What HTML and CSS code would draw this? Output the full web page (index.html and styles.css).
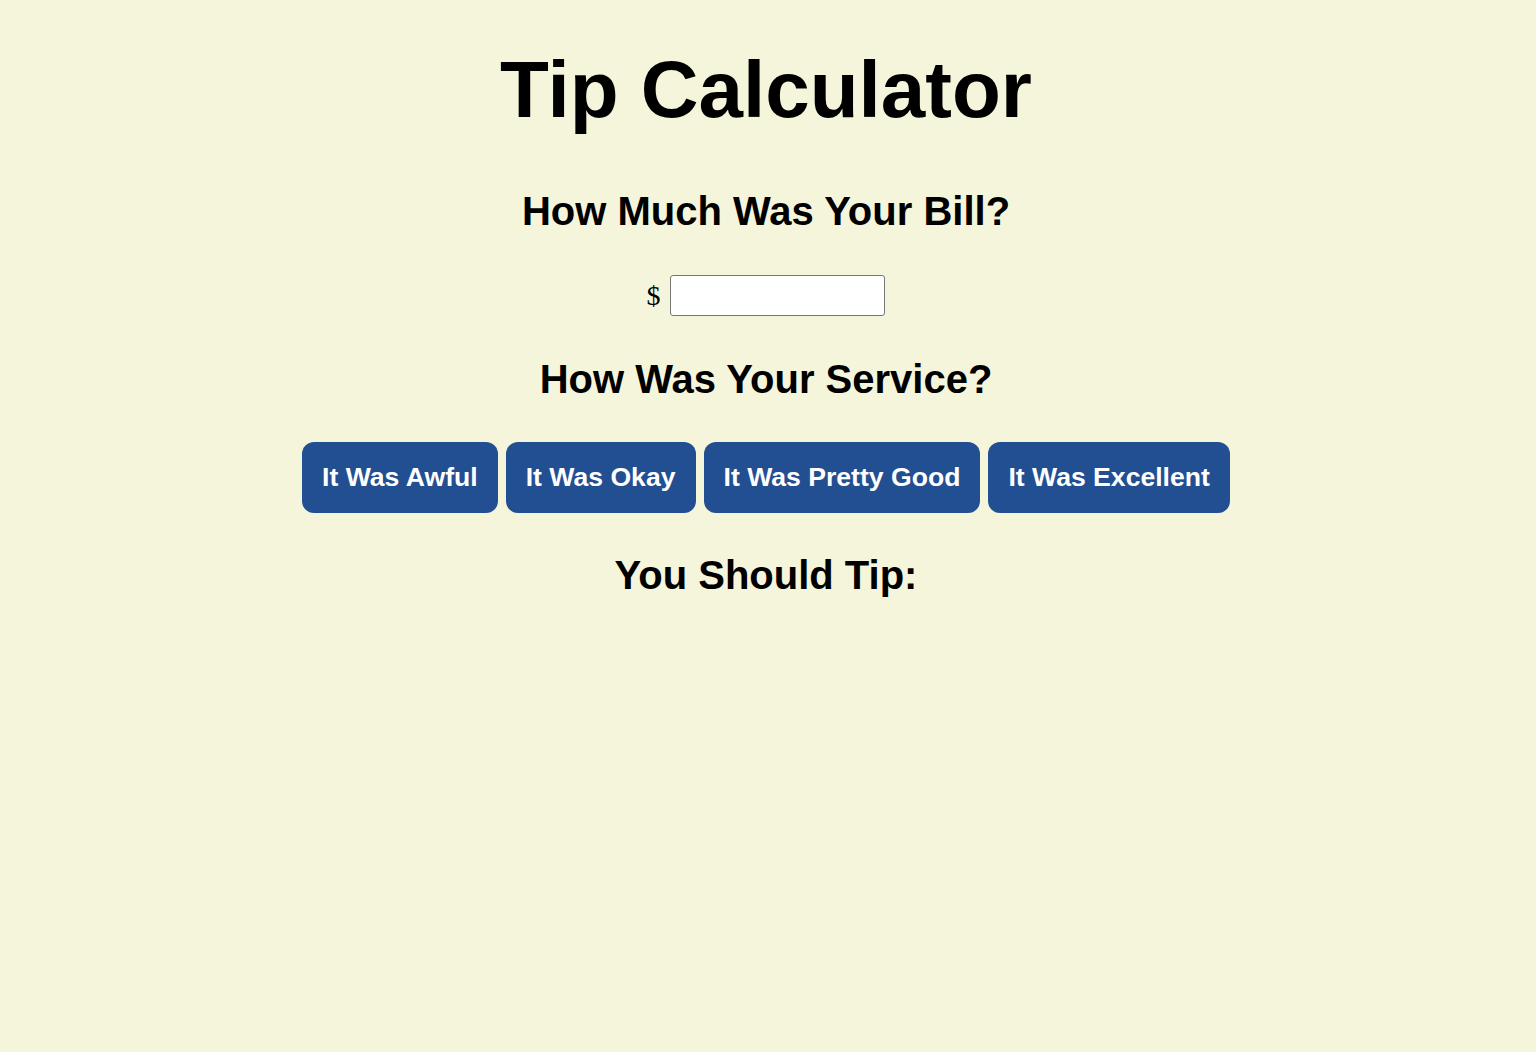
FILE: index.html
```html
<!DOCTYPE html>
<html lang="en">
<head>
<meta charset="utf-8">
<title>Tip Calculator</title>
<link rel="stylesheet" href="styles.css">
</head>
<body>
<main class="app">
  <h1 class="title">Tip Calculator</h1>
  <h2 class="question question-bill">How Much Was Your Bill?</h2>
  <div class="bill-row">
    <span class="currency">$</span>
    <input class="bill-input" type="text" aria-label="Bill amount">
  </div>
  <h2 class="question question-service">How Was Your Service?</h2>
  <div class="service-buttons">
    <button class="service-btn" type="button">It Was Awful</button>
    <button class="service-btn" type="button">It Was Okay</button>
    <button class="service-btn" type="button">It Was Pretty Good</button>
    <button class="service-btn" type="button">It Was Excellent</button>
  </div>
  <h2 class="question question-tip">You Should Tip:</h2>
</main>
</body>
</html>
```

FILE: styles.css
```css
html, body {
  margin: 0;
  padding: 0;
  height: 100%;
}

body {
  background: #f5f5dc;
  font-family: "Liberation Sans", Arial, Helvetica, sans-serif;
  color: #000;
}

.app {
  display: flex;
  flex-direction: column;
  align-items: center;
  padding-right: 4px;
}

.title {
  margin: 44px 0 0;
  font-size: 80px;
  font-weight: bold;
  line-height: 92px;
}

.question {
  margin: 0;
  font-size: 40px;
  font-weight: bold;
  line-height: 46px;
}

.question-bill {
  margin-top: 52px;
}

.bill-row {
  display: flex;
  align-items: center;
  gap: 9px;
  margin-top: 41px;
  margin-right: 1px;
}

.currency {
  font-family: "Liberation Serif", "Times New Roman", serif;
  font-size: 28px;
  line-height: 41px;
}

.bill-input {
  box-sizing: border-box;
  width: 215px;
  height: 41px;
  margin: 0;
  border: 1px solid #767676;
  border-radius: 3px;
  background: #fff;
  font-size: 20px;
  padding: 0 6px;
}

.question-service {
  margin-top: 40px;
}

.service-buttons {
  display: flex;
  gap: 8px;
  margin-top: 40px;
}

.service-btn {
  margin: 0;
  border: none;
  border-radius: 12px;
  padding: 20px 20px;
  background: #224f92;
  color: #fff;
  font-family: "Liberation Sans", Arial, Helvetica, sans-serif;
  font-size: 26.6px;
  font-weight: bold;
  line-height: 31px;
  cursor: pointer;
}

.question-tip {
  margin-top: 39px;
}
```
